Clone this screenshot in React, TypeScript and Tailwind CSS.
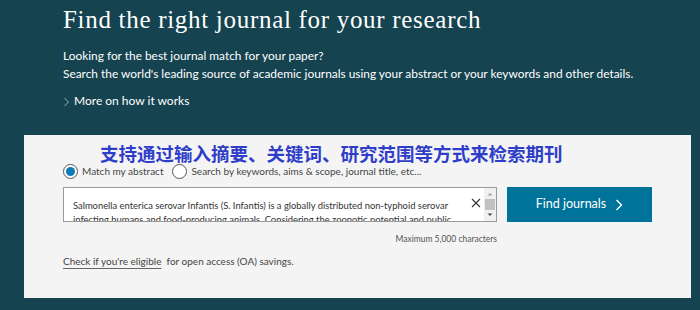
import React from "react";

export default function App() {
  const sans = { fontFamily: "Lato, 'Open Sans', sans-serif" };
  return (
    <div className="w-[700px] h-[310px] bg-[#15434f] overflow-hidden relative" style={sans}>
      <div className="pl-[63px] pt-[5px]">
        <h1
          className="text-[25px] leading-[30px] text-white tracking-[0.7px]"
          style={{ fontFamily: "'Liberation Serif', serif" }}
        >
          Find the right journal for your research
        </h1>
        <p className="mt-[12px] text-[11.9px] leading-[18px] text-white">
          Looking for the best journal match for your paper?
          <br />
          Search the world's leading source of academic journals using your abstract or your keywords and other details.
        </p>
        <div className="mt-[9px] flex items-center gap-[4px] text-[12px] leading-[18px] text-white">
          <svg width="7" height="10" viewBox="0 0 7 10" className="mt-[1px]">
            <path d="M1.5 1 L5.5 5 L1.5 9" fill="none" stroke="#9fb3b8" strokeWidth="1" />
          </svg>
          <span>More on how it works</span>
        </div>
      </div>

      <div className="ml-[24px] mt-[25px] w-[667px] h-[163px] bg-[#f4f4f4] pl-[39px] pt-[7px]">
        <div
          className="pl-[37px] text-[18.5px] leading-[22px] font-bold text-[#2f3ec9]"
          style={{ fontFamily: "'Noto Sans CJK SC', sans-serif" }}
        >
          支持通过输入摘要、关键词、研究范围等方式来检索期刊
        </div>
        <div className="flex items-center h-[16px] text-[10px] text-[#444] -mt-[1px]">
          <span className="w-[15px] h-[15px] rounded-full border border-[#555] flex items-center justify-center bg-white">
            <span className="w-[9px] h-[9px] rounded-full bg-[#0c7cb5]" />
          </span>
          <span className="ml-[4px]">Match my abstract</span>
          <span className="ml-[9px] w-[15px] h-[15px] rounded-full border border-[#555] bg-white" />
          <span className="ml-[4px]">Search by keywords, aims &amp; scope, journal title, etc...</span>
        </div>
        <div className="flex mt-[8px]">
          <div className="w-[434px] h-[35px] border border-[#9a9a9a] bg-white relative overflow-hidden">
            <div className="pl-[9px] pr-[30px] pt-[11px] text-[9.4px] leading-[14px] text-[#333] whitespace-nowrap">
              Salmonella enterica serovar Infantis (S. Infantis) is a globally distributed non-typhoid serovar
              <br />
              infecting humans and food-producing animals. Considering the zoonotic potential and public
            </div>
            <div className="absolute right-[15px] top-[10px]">
              <svg width="10" height="10" viewBox="0 0 10 10">
                <path d="M1 1 L9 9 M9 1 L1 9" stroke="#333" strokeWidth="1.1" />
              </svg>
            </div>
            <div className="absolute right-0 top-0 w-[12px] h-full bg-[#f0f0f0] flex flex-col items-center">
              <svg width="8" height="8" viewBox="0 0 8 8" className="mt-[2px]">
                <path d="M1.5 5.5 L4 3 L6.5 5.5 Z" fill="#a3a3a3" />
              </svg>
              <div className="w-[10px] h-[11px] bg-[#c1c1c1] mt-[1px]" />
              <svg width="8" height="8" viewBox="0 0 8 8" className="mt-auto mb-[2px]">
                <path d="M1.5 2.5 L4 5 L6.5 2.5 Z" fill="#505050" />
              </svg>
            </div>
          </div>
          <button className="ml-[10px] w-[145px] h-[35px] bg-[#00739a] text-white text-[12.5px] flex items-center justify-center gap-[9px]">
            <span>Find journals</span>
            <svg width="8" height="12" viewBox="0 0 8 12">
              <path d="M1.5 1 L6.5 6 L1.5 11" fill="none" stroke="#fff" strokeWidth="1.4" />
            </svg>
          </button>
        </div>
        <div className="w-[434px] text-right text-[8.5px] text-[#555] mt-[11px] leading-[12px]">
          Maximum 5,000 characters
        </div>
        <div className="mt-[9px] text-[10px] text-[#444] leading-[14px]">
          <span className="underline underline-offset-[3px] decoration-[#666]">Check if you're eligible</span>
          <span>&nbsp; for open access (OA) savings.</span>
        </div>
      </div>
    </div>
  );
}
